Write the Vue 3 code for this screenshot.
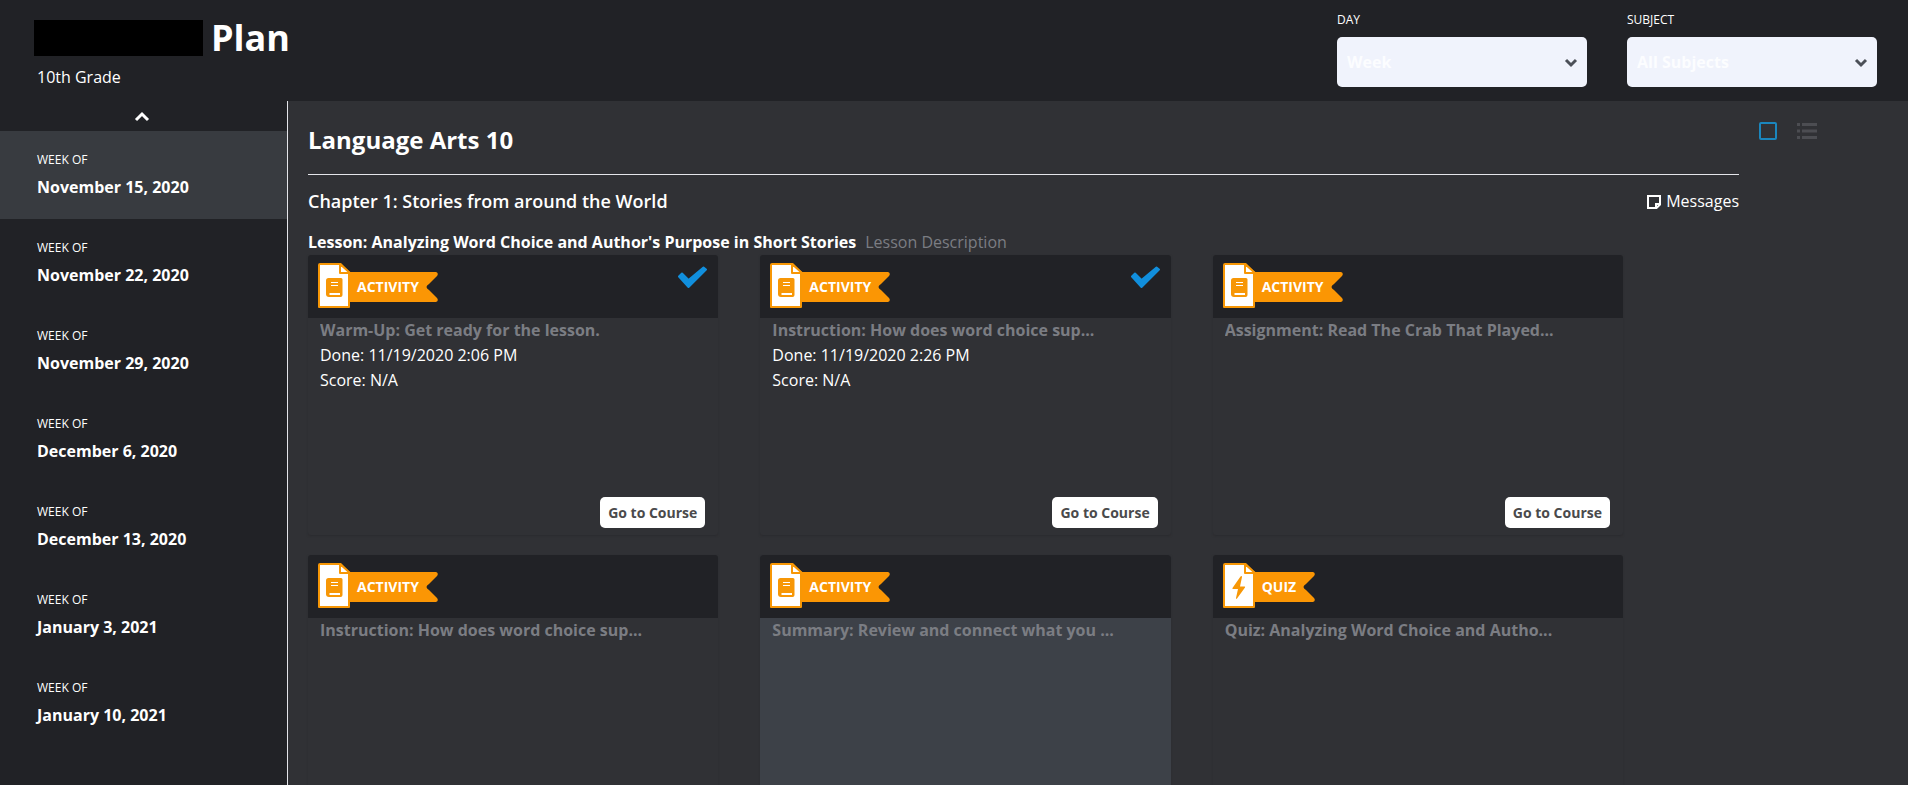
<script setup>
import { ref } from 'vue'

const selectedWeek = ref(0)
const day = ref('Week')
const subject = ref('All Subjects')
const view = ref('card')

const weeks = [
  'November 15, 2020',
  'November 22, 2020',
  'November 29, 2020',
  'December 6, 2020',
  'December 13, 2020',
  'January 3, 2021',
  'January 10, 2021',
]

const cards = [
  { kind: 'Activity', title: 'Warm-Up: Get ready for the lesson.', done: '11/19/2020 2:06 PM', score: 'N/A', open: true },
  { kind: 'Activity', title: 'Instruction: How does word choice sup...', done: '11/19/2020 2:26 PM', score: 'N/A', open: true },
  { kind: 'Activity', title: 'Assignment: Read The Crab That Played...', open: true },
  { kind: 'Activity', title: 'Instruction: How does word choice sup...' },
  { kind: 'Activity', title: 'Summary: Review and connect what you ...', active: true },
  { kind: 'Quiz', title: 'Quiz: Analyzing Word Choice and Autho...' },
]
</script>

<template>
  <div class="page">
    <header class="top">
      <div class="identity">
        <h1><span class="name"></span>Plan</h1>
        <p class="grade">10th Grade</p>
      </div>
      <div class="filters">
        <div class="field">
          <label for="day">DAY</label>
          <div class="select">
            <select id="day" v-model="day">
              <option>Week</option>
            </select>
            <svg class="caret" viewBox="0 0 14 10" aria-hidden="true"><path d="M2 2l5 5 5-5" /></svg>
          </div>
        </div>
        <div class="field">
          <label for="subject">SUBJECT</label>
          <div class="select">
            <select id="subject" v-model="subject">
              <option>All Subjects</option>
            </select>
            <svg class="caret" viewBox="0 0 14 10" aria-hidden="true"><path d="M2 2l5 5 5-5" /></svg>
          </div>
        </div>
      </div>
    </header>

    <div class="body">
      <nav class="weeks" aria-label="Weeks">
        <button class="up" type="button" aria-label="Earlier weeks">
          <svg viewBox="0 0 16 11" aria-hidden="true"><path d="M2 9l6-6 6 6" /></svg>
        </button>
        <button
          v-for="(week, i) in weeks"
          :key="week"
          type="button"
          class="week"
          :class="{ selected: i === selectedWeek }"
          @click="selectedWeek = i"
        >
          <span class="week-of">WEEK OF</span>
          <span class="date">{{ week }}</span>
        </button>
      </nav>

      <main class="main">
        <section class="course">
          <h2>Language Arts 10</h2>
          <div class="chapter">
            <h3>Chapter 1: Stories from around the World</h3>
            <a href="#messages" class="messages">
              <svg viewBox="0 0 14 14" aria-hidden="true">
                <path d="M1 1h12v8.500l-3.500 3.500H1z" />
                <path d="M13 9H9v4" />
              </svg>
              Messages
            </a>
          </div>
          <p class="lesson">
            <strong>Lesson: Analyzing Word Choice and Author's Purpose in Short Stories</strong>
            <span>Lesson Description</span>
          </p>
          <div class="cards">
            <article v-for="(card, i) in cards" :key="i" class="card" :class="{ active: card.active }">
              <div class="card-head">
                <div class="tag">
                  <svg class="sheet" viewBox="0 0 34 45" aria-hidden="true">
                    <path class="paper" d="M2 1h20.500L31 9.500V44H1V2a1 1 0 0 1 1-1z" />
                    <path class="fold" d="M22 1v9h10z" />
                    <template v-if="card.kind === 'Activity'">
                      <path class="ink" d="M10.500 15H23a1.500 1.500 0 0 1 1.500 1.500V32q0 2-2 2H11q-3 0-3-3V17.500q0-2.500 2.500-2.500z" />
                      <path class="line" d="M13 19.500h7M13 22.500h7" />
                      <path class="base" d="M11.500 31H22" />
                    </template>
                    <path
                      v-else
                      class="ink"
                      d="M17.500 13.500L9.500 25q-.5 1 .5 1h5l-2 9q0 1.500 1 .5l8-11q.5-1-.5-1h-4.500l2-9.500q0-1.500-1.500-.5z"
                    />
                  </svg>
                  <span class="ribbon">{{ card.kind.toUpperCase() }}</span>
                  <svg class="tail" viewBox="0 0 13 30" aria-hidden="true">
                    <path d="M0 0h11q3 1 1 4L4 12Q-1 15 4 18l8 8q2 3-1 4H0z" />
                  </svg>
                </div>
                <svg v-if="card.done" class="check" viewBox="0 0 30 23" role="img" aria-label="Done">
                  <path d="M2 10.500L5 7.500l6.500 6.500L26.500 1.500l2.500 2L11.500 21z" />
                </svg>
              </div>
              <div class="card-body">
                <h4>{{ card.title }}</h4>
                <template v-if="card.done">
                  <p>Done: {{ card.done }}</p>
                  <p>Score: {{ card.score }}</p>
                </template>
                <button v-if="card.open" type="button" class="go">Go to Course</button>
              </div>
            </article>
          </div>
        </section>

        <div class="views">
          <button type="button" aria-label="Card view" :class="{ on: view === 'card' }" @click="view = 'card'">
            <svg viewBox="0 0 20 18" aria-hidden="true"><rect x="2" y="1" width="16" height="16" rx="1" fill="none" stroke="currentColor" stroke-width="2" /></svg>
          </button>
          <button type="button" aria-label="List view" :class="{ on: view === 'list' }" @click="view = 'list'">
            <svg viewBox="0 0 20 18" aria-hidden="true"><path d="M0 2.500h3M5 2.500h15M0 9h3M5 9h15M0 15.500h3M5 15.500h15" fill="none" stroke="currentColor" stroke-width="3" /></svg>
          </button>
        </div>
      </main>
    </div>
  </div>
</template>

<style>
body {
  background: #303135;
}
</style>

<style scoped>
.page {
  height: 100vh;
  display: flex;
  flex-direction: column;
  overflow: hidden;
  background: #303135;
  color: #fff;
  font-family: "Open Sans", "Noto Sans", sans-serif;
  font-size: 16px;
  line-height: 25px;
}
h1, h2, h3, h4, p {
  margin: 0;
}
button, select {
  font-family: inherit;
  border: 0;
}
button {
  cursor: pointer;
}
svg {
  display: block;
}
.top {
  display: flex;
  justify-content: space-between;
  align-items: flex-start;
  padding: 8px 31px 11px 34px;
  background: #212226;
}
h1 {
  display: flex;
  align-items: center;
  gap: 8px;
  padding-top: 4px;
  font-size: 36px;
  line-height: 52px;
}
.name {
  width: 169px;
  height: 36px;
  background: #000;
}
.grade {
  padding: 1px 3px 0;
}
.filters {
  display: flex;
  gap: 40px;
}
.field label {
  display: block;
  padding-bottom: 5px;
  font-size: 12px;
  line-height: 24px;
}
.select {
  position: relative;
  width: 250px;
}
select {
  display: block;
  width: 100%;
  height: 50px;
  padding: 0 10px;
  appearance: none;
  border-radius: 5px;
  background: #f0f3fc;
  color: #fcfdff;
  font-size: 16px;
  font-weight: 700;
}
.caret {
  position: absolute;
  right: 9px;
  top: 21px;
  width: 14px;
  height: 10px;
  pointer-events: none;
}
.caret path {
  fill: none;
  stroke: #4c5058;
  stroke-width: 3;
}
.body {
  flex: 1;
  min-height: 0;
  display: flex;
}
.weeks {
  flex: none;
  width: 287px;
  display: flex;
  flex-direction: column;
  overflow: hidden;
  border-right: 1px solid #e4e5ea;
  background: #212226;
}
.up {
  flex: none;
  display: flex;
  justify-content: center;
  align-items: center;
  height: 30px;
  padding: 0 3px 0 0;
  background: none;
}
.up svg {
  width: 16px;
  height: 11px;
}
.up path {
  fill: none;
  stroke: #fff;
  stroke-width: 3;
}
.week {
  flex: none;
  display: flex;
  flex-direction: column;
  height: 88px;
  padding: 15px 37px 0;
  background: none;
  color: #fff;
  text-align: left;
}
.week.selected {
  background: #383b40;
}
.week-of {
  font-size: 12px;
  line-height: 28px;
}
.date {
  font-size: 16px;
  line-height: 26px;
  font-weight: 700;
}
.main {
  flex: 1;
  min-width: 0;
  display: flex;
  align-items: flex-start;
  padding-left: 20px;
}
.course {
  flex: 1;
  min-width: 0;
}
h2 {
  padding: 22px 0 17px;
  border-bottom: 1px solid #e4e5ea;
  font-size: 24px;
  line-height: 34px;
}
.chapter {
  display: flex;
  justify-content: space-between;
  align-items: center;
  padding: 14px 0 16px;
}
h3 {
  font-size: 18px;
  font-weight: 600;
  line-height: 25px;
}
.messages {
  display: flex;
  align-items: center;
  gap: 5px;
  color: #fff;
  text-decoration: none;
}
.messages svg {
  width: 14px;
  height: 14px;
}
.messages path {
  fill: none;
  stroke: currentColor;
  stroke-width: 2;
}
.lesson {
  display: flex;
  gap: 9px;
}
.lesson span {
  color: #7b7d83;
}
.cards {
  display: grid;
  grid-template-columns: repeat(3, 1fr);
  gap: 20px 42px;
  padding-right: 116px;
}
.card {
  display: flex;
  flex-direction: column;
  height: 280px;
  border-radius: 3px;
  box-shadow: 0 1px 2px #2a2b2f;
}
.card.active {
  background: #3d4148;
}
.card-head {
  display: flex;
  justify-content: space-between;
  align-items: flex-start;
  height: 55px;
  padding: 8px 11px 0 10px;
  border-radius: 3px 3px 0 0;
  background: #212226;
}
.tag {
  display: flex;
  align-items: flex-start;
}
.sheet {
  width: 34px;
  height: 45px;
}
.paper, .fold {
  fill: #fff;
  stroke: #f79706;
  stroke-width: 2;
  stroke-linejoin: round;
}
.ink {
  fill: #f79706;
}
.line {
  stroke: #fff;
  stroke-width: 1;
}
.base {
  stroke: #fff;
  stroke-width: 2;
}
.ribbon {
  height: 30px;
  margin: 9px 0 0 -2px;
  padding: 0 6px 0 7px;
  background: #fb9604;
  font-size: 14px;
  font-weight: 700;
  line-height: 30px;
}
.tail {
  width: 13px;
  height: 30px;
  margin-top: 9px;
}
.tail path {
  fill: #fb9604;
}
.check {
  width: 30px;
  height: 23px;
  padding-top: 3px;
}
.check path {
  fill: #118fdd;
  stroke: #118fdd;
  stroke-width: 2;
  stroke-linejoin: round;
}
.card-body {
  flex: 1;
  display: flex;
  flex-direction: column;
  padding: 0 13px 7px 12px;
}
h4 {
  overflow: hidden;
  color: #7b7d83;
  font-size: 16px;
  white-space: nowrap;
}
.go {
  align-self: flex-end;
  margin-top: auto;
  height: 31px;
  padding: 0 8px;
  border-radius: 5px;
  background: #fff;
  color: #4a4a4c;
  font-size: 14px;
  font-weight: 700;
}
.views {
  flex: none;
  display: flex;
  gap: 19px;
  width: 150px;
  padding: 21px 0 0 19px;
}
.views button {
  padding: 0;
  background: none;
  color: #4c4d52;
}
.views button.on {
  color: #1b86bd;
}
.views svg {
  width: 20px;
  height: 18px;
}
</style>
